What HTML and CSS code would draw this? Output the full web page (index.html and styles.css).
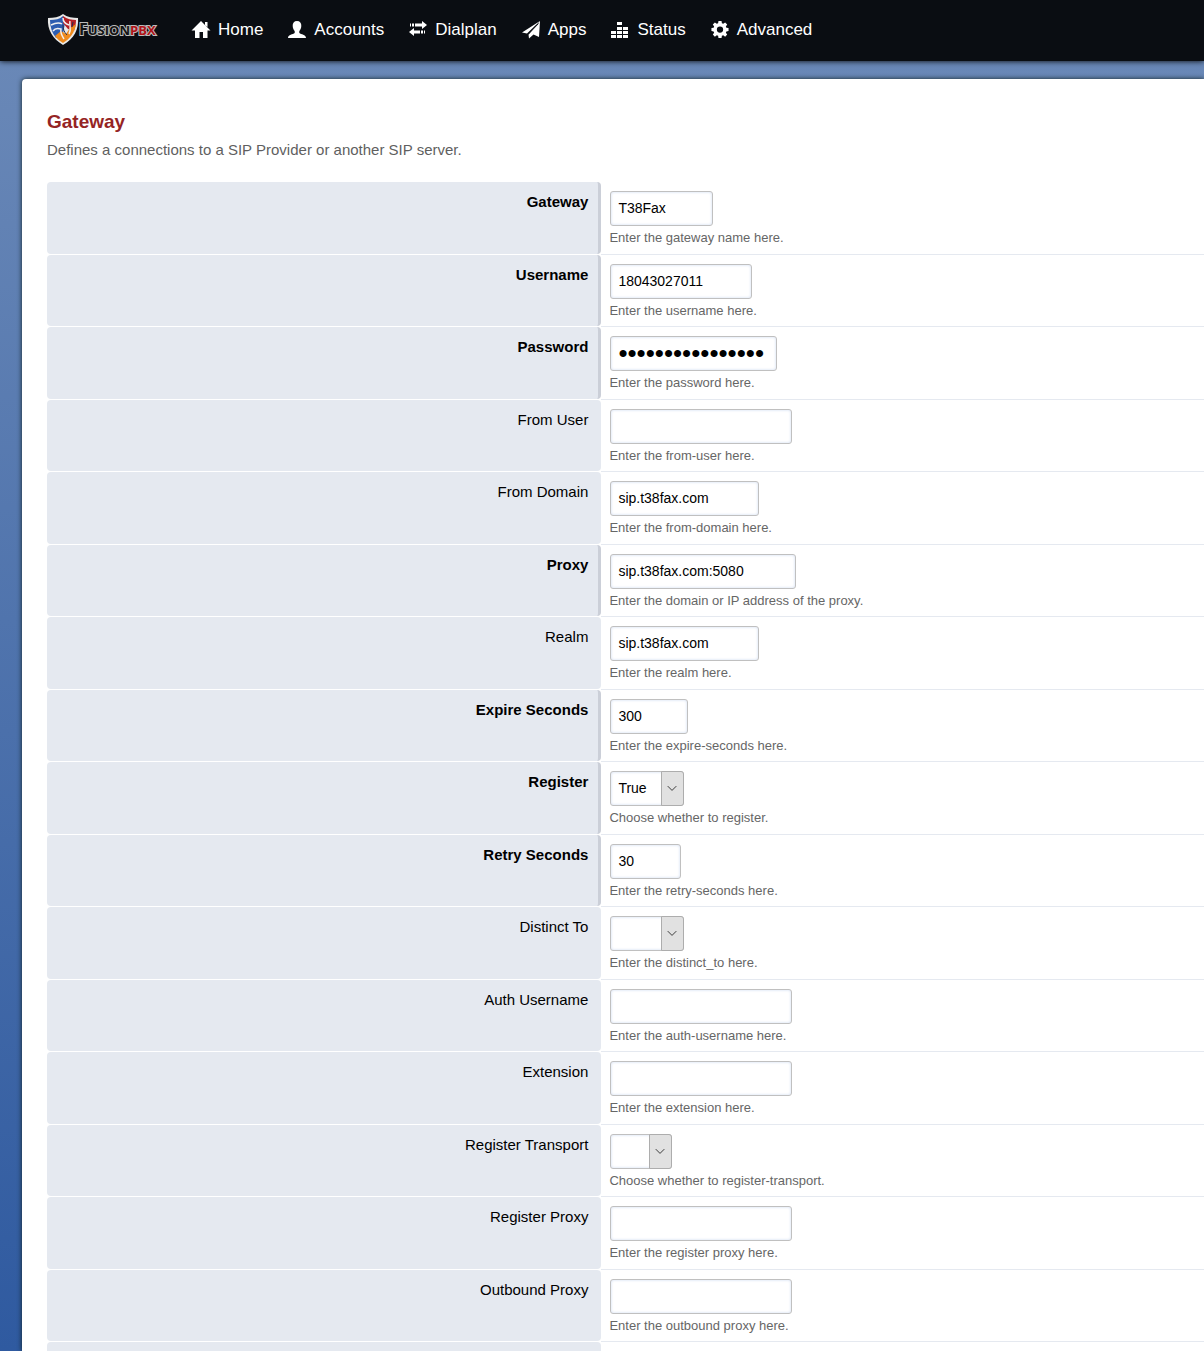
FILE: index.html
```html
<!DOCTYPE html>
<html lang="en">
<head>
    <meta charset="UTF-8">
    <meta name="viewport" content="width=device-width, initial-scale=1.0">
    <title>Gateway</title>
    <link rel="stylesheet" href="styles.css">
</head>
<body>

    <nav class="navbar">
        <a class="brand" href="#" aria-label="FusionPBX">
            <svg class="logo" viewBox="0 0 108 32">
                <path d="M15 0 C19 3 25 4 30 4 C31 15 26 25 15 31 C5 25 -1 16 0 4 C6 4 11 3 15 0Z" fill="#e8e8e8"/>
                <path d="M2 6 C7 6 12 5 15 2 L17 9 L15 20 L8 24 C4 19 2 13 2 6Z" fill="#2d5db0"/>
                <path d="M15 2 C19 5 24 6 28 6 C28 10 27 14 26 17 L20 15 L15 9Z" fill="#b52025"/>
                <path d="M28 10 C27 18 22 25 15 29 C12 27 9 25 7 22 L13 17 L18 20 L22 14Z" fill="#ee8a1d"/>
                <path d="M3 11 C7 9 11 8 14 10 M5 17 C7 14 10 14 13 15 C12 19 14 22 16 25 M15 4 C15 8 18 10 21 11 M22 7 C21 12 24 15 21 20" fill="none" stroke="#f0f0f0" stroke-width="1.500"/>
                <path d="M15 11 C15 15 16 18 19 21 M25 8 L24 13" fill="none" stroke="#26304a" stroke-width="1"/>
                <text class="brand-text" x="31" y="21"><tspan class="brand-cap">F</tspan>USION<tspan class="brand-pbx">PBX</tspan></text>
            </svg>
        </a>
        <a class="nav-link" href="#">
            <svg class="icon" viewBox="0 0 18 18"><path d="M9 0 L18.500 9.500 H15.500 V17 H11 V11 H7.500 V17 H3 V9.500 H-.5 L9 0Z M13 1 H15.500 V6 L13 4Z"/></svg>
            Home
        </a>
        <a class="nav-link" href="#">
            <svg class="icon" viewBox="0 0 18 18"><path d="M9 0 C12 0 13.500 2 13.300 5 C13.200 7.500 12.200 9 11.300 10 V12 C13 13.500 18 13.500 18 17 H0 C0 13.500 5 13.500 6.700 12 V10 C5.800 9 4.800 7.500 4.700 5 C4.500 2 6 0 9 0Z"/></svg>
            Accounts
        </a>
        <a class="nav-link" href="#">
            <svg class="icon" viewBox="0 0 18 18"><path d="M13 0 L18 4 L13 8 V5.500 H6 V2.500 H13Z M1 2.500 H2 V5.500 H1Z M3 2.500 H5 V5.500 H3Z M5 7 L0 11 L5 15 V12.500 H11 V9.500 H5Z M12 9.500 H14 V12.500 H12Z M15 9.500 H16 V12.500 H15Z"/></svg>
            Dialplan
        </a>
        <a class="nav-link" href="#">
            <svg class="icon" viewBox="0 0 18 18"><path d="M18 0 L5 12.500 L0 11.500Z M18 0 L17 16 L11.500 13.500 L7 17.500 L6.500 13.500Z"/><path class="fold" d="M16.500 2.500 L6 13.500"/></svg>
            Apps
        </a>
        <a class="nav-link" href="#">
            <svg class="icon" viewBox="0 0 18 18"><path d="M0 14h5v3H0z M0 10h5v3H0z M6 14h5v3H6z M6 10h5v3H6z M6 6h5v3H6z M6 1h5v3H6z M12 14h5v3h-5z M12 10h5v3h-5z M12 6h5v3h-5z"/></svg>
            Status
        </a>
        <a class="nav-link" href="#">
            <svg class="icon" viewBox="-1 0 20 20"><path fill-rule="evenodd" d="M7.300 0h3.400l.4 2.500 1.500.6L14.700 1.600 17 4l-1.500 2 .6 1.500 2.400.4v3.300l-2.400.4-.6 1.500 1.500 2-2.300 2.300-2.100-1.500-1.500.6-.4 2.500H7.300l-.4-2.500-1.500-.6-2.100 1.500L1 15.100l1.500-2-.6-1.500-2.400-.4V7.900l2.400-.4.6-1.500L1 4l2.300-2.400 2.100 1.500 1.500-.6z M9 6a3.500 3.500 0 1 0 0 7a3.500 3.500 0 1 0 0-7z"/></svg>
            Advanced
        </a>
    </nav>

    <main class="content">
        <h1>Gateway</h1>
        <p class="description">Defines a connections to a SIP Provider or another SIP server.</p>

        <form class="fields">
            <div class="field required">
                <label for="gateway">Gateway</label>
                <div class="value">
                    <input type="text" id="gateway" value="T38Fax" style="width: 103px">
                    <p>Enter the gateway name here.</p>
                </div>
            </div>
            <div class="field required">
                <label for="username">Username</label>
                <div class="value">
                    <input type="text" id="username" value="18043027011" style="width: 142px">
                    <p>Enter the username here.</p>
                </div>
            </div>
            <div class="field required">
                <label for="password">Password</label>
                <div class="value">
                    <input type="password" id="password" value="0123456789abcdef" style="width: 167px">
                    <p>Enter the password here.</p>
                </div>
            </div>
            <div class="field">
                <label for="from_user">From User</label>
                <div class="value">
                    <input type="text" id="from_user">
                    <p>Enter the from-user here.</p>
                </div>
            </div>
            <div class="field">
                <label for="from_domain">From Domain</label>
                <div class="value">
                    <input type="text" id="from_domain" value="sip.t38fax.com" style="width: 149px">
                    <p>Enter the from-domain here.</p>
                </div>
            </div>
            <div class="field required">
                <label for="proxy">Proxy</label>
                <div class="value">
                    <input type="text" id="proxy" value="sip.t38fax.com:5080" style="width: 186px">
                    <p>Enter the domain or IP address of the proxy.</p>
                </div>
            </div>
            <div class="field">
                <label for="realm">Realm</label>
                <div class="value">
                    <input type="text" id="realm" value="sip.t38fax.com" style="width: 149px">
                    <p>Enter the realm here.</p>
                </div>
            </div>
            <div class="field required">
                <label for="expire_seconds">Expire Seconds</label>
                <div class="value">
                    <input type="text" id="expire_seconds" value="300" style="width: 78px">
                    <p>Enter the expire-seconds here.</p>
                </div>
            </div>
            <div class="field required">
                <label for="register">Register</label>
                <div class="value">
                    <div class="select">
                        <select id="register">
                            <option selected>True</option>
                            <option>False</option>
                        </select>
                        <svg class="arrow" viewBox="0 0 22 33"><path d="M6 14 L10.500 18.500 L15 14"/></svg>
                    </div>
                    <p>Choose whether to register.</p>
                </div>
            </div>
            <div class="field required">
                <label for="retry_seconds">Retry Seconds</label>
                <div class="value">
                    <input type="text" id="retry_seconds" value="30" style="width: 71px">
                    <p>Enter the retry-seconds here.</p>
                </div>
            </div>
            <div class="field">
                <label for="distinct_to">Distinct To</label>
                <div class="value">
                    <div class="select">
                        <select id="distinct_to">
                            <option selected></option>
                            <option>True</option>
                            <option>False</option>
                        </select>
                        <svg class="arrow" viewBox="0 0 22 33"><path d="M6 14 L10.500 18.500 L15 14"/></svg>
                    </div>
                    <p>Enter the distinct_to here.</p>
                </div>
            </div>
            <div class="field">
                <label for="auth_username">Auth Username</label>
                <div class="value">
                    <input type="text" id="auth_username">
                    <p>Enter the auth-username here.</p>
                </div>
            </div>
            <div class="field">
                <label for="extension">Extension</label>
                <div class="value">
                    <input type="text" id="extension">
                    <p>Enter the extension here.</p>
                </div>
            </div>
            <div class="field">
                <label for="register_transport">Register Transport</label>
                <div class="value">
                    <div class="select narrow">
                        <select id="register_transport">
                            <option selected></option>
                            <option>udp</option>
                            <option>tcp</option>
                            <option>tls</option>
                        </select>
                        <svg class="arrow" viewBox="0 0 22 33"><path d="M6 14 L10.500 18.500 L15 14"/></svg>
                    </div>
                    <p>Choose whether to register-transport.</p>
                </div>
            </div>
            <div class="field">
                <label for="register_proxy">Register Proxy</label>
                <div class="value">
                    <input type="text" id="register_proxy">
                    <p>Enter the register proxy here.</p>
                </div>
            </div>
            <div class="field">
                <label for="outbound_proxy">Outbound Proxy</label>
                <div class="value">
                    <input type="text" id="outbound_proxy">
                    <p>Enter the outbound proxy here.</p>
                </div>
            </div>
            <div class="field-end"><span></span></div>
        </form>
    </main>

</body>
</html>
```
FILE: styles.css
```css
* {
    box-sizing: border-box;
}
body {
    display: flex;
    flex-direction: column;
    min-height: 100vh;
    margin: 0;
    font-family: Arial, "Liberation Sans", sans-serif;
    font-size: 15px;
    color: #000;
    background: linear-gradient(#6c8ab8, #2f5aa0);
}
.navbar {
    display: flex;
    align-items: center;
    gap: 25px;
    height: 61px;
    padding: 0 48px 2px;
    background: #0a0d12;
    box-shadow: 0 0 6px #000;
}
.brand {
    display: flex;
    margin-right: 11px;
}
.logo {
    width: 108px;
    height: 32px;
    overflow: visible;
}
.brand-text {
    font-family: "Open Sans", sans-serif;
    font-size: 13px;
    font-weight: bold;
    fill: #151515;
    stroke: #bbb;
    stroke-width: 2px;
    paint-order: stroke;
}
.brand-cap {
    font-size: 16px;
}
.brand-pbx {
    fill: #b01217;
}
.nav-link {
    display: flex;
    align-items: center;
    gap: 8px;
    color: #fff;
    font-size: 17px;
    text-decoration: none;
}
.icon {
    width: 18px;
    height: 18px;
    fill: #fff;
    overflow: visible;
}
.fold {
    fill: none;
    stroke: #0a0d12;
    stroke-width: 1px;
}
.content {
    display: flex;
    flex-direction: column;
    flex: 1;
    margin: 18px 0 0 22px;
    padding: 32px 0 0 25px;
    background: #fff;
    border-radius: 4px 0 0 0;
    box-shadow: 0 0 5px #122;
}
h1 {
    margin: 0;
    font-size: 19px;
    line-height: 22px;
    color: #952424;
}
.description {
    margin: 7px 0 22px;
    line-height: 20px;
    color: #5f5f5f;
}
.fields {
    display: flex;
    flex-direction: column;
    flex: 1;
}
.field,
.field-end {
    display: grid;
    grid-template-columns: 23fr 25fr;
}
.field {
    height: 73px;
}
.field:nth-child(even) {
    height: 72px;
}
.field-end {
    flex: 1;
}
.field-end span {
    background: #e5e9f0;
    border-radius: 4px 4px 0 0;
}
.field label {
    margin-bottom: 1px;
    padding: 10px 13px;
    line-height: 20px;
    text-align: right;
    background: #e5e9f0;
    border-radius: 4px;
}
.field.required label {
    padding-right: 10px;
    font-weight: bold;
    border-right: 3px solid #cbcfd8;
}
.value {
    padding: 9px 0 0 8px;
    border-bottom: 1px solid #e5e9f0;
}
.value p {
    margin: 4px 0 0;
    font-size: 13px;
    line-height: 16px;
    color: #666;
}
input,
select {
    display: block;
    height: 35px;
    margin-left: 1px;
    padding: 0 7px 2px;
    font-family: inherit;
    font-size: 14px;
    color: #000;
    background: #fff;
    border: 1px solid #c0c0c0;
    border-radius: 3px;
    box-shadow: inset 0 0 3px #cddaf0;
}
input {
    width: 182px;
}
input[type="password"] {
    padding-bottom: 0;
    font-size: 26px;
}
.select {
    position: relative;
    width: 75px;
}
.narrow {
    width: 63px;
}
select {
    width: calc(100% - 1px);
    appearance: none;
}
.arrow {
    position: absolute;
    top: 0;
    right: 0;
    width: 23px;
    height: 35px;
    background: #e1e1e1;
    border: 1px solid #adadad;
    border-radius: 0 3px 3px 0;
    fill: none;
    stroke: #333;
    pointer-events: none;
}
```
